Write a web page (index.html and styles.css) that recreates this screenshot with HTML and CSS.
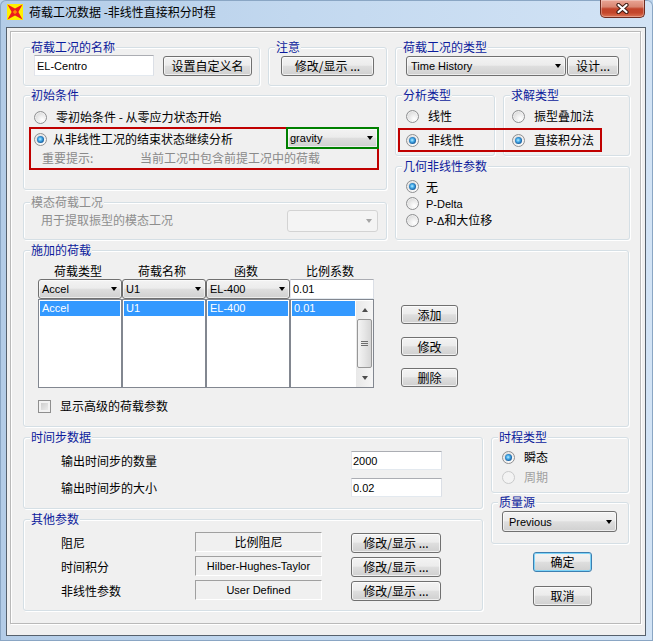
FILE: index.html
```html
<!DOCTYPE html>
<html>
<head>
<meta charset="utf-8">
<title>荷载工况数据</title>
<link rel="stylesheet" href="styles.css">
</head>
<body>
<div class="window">
  <div class="titlebar">
    <svg class="app-icon" width="16" height="16" viewBox="0 0 16 16">
      <rect x="0" y="0" width="16" height="16" fill="#fff000"/>
      <path d="M0.5 0.5 L8 4.6 L15.5 0.5 L11.4 8 L15.5 15.5 L8 11.4 L0.5 15.5 L4.6 8 Z" fill="#ec1c1c"/>
      <path d="M8 5.8 L10.2 8 L8 10.2 L5.8 8 Z" fill="#ff8a00"/>
    </svg>
    <span class="title">荷载工况数据 -非线性直接积分时程</span>
    <div class="close-btn">
      <svg width="13" height="11" viewBox="0 0 13 11">
        <path d="M2.5 2 L10.5 9 M10.5 2 L2.5 9" stroke="#3d1a12" stroke-width="4.2" stroke-linecap="round"/>
        <path d="M2.5 2 L10.5 9 M10.5 2 L2.5 9" stroke="#ffffff" stroke-width="2.2" stroke-linecap="round"/>
      </svg>
    </div>
  </div>

  <div class="client">
    <div class="panel">

      <div class="row row-a">
        <div class="group g-name">
          <span class="legend">荷载工况的名称</span>
          <div class="textbox tb-name lat">EL-Centro</div>
          <div class="btn btn-custom">设置自定义名</div>
        </div>
        <div class="group g-note">
          <span class="legend">注意</span>
          <div class="btn btn-note">修改/显示 ...</div>
        </div>
        <div class="group g-type">
          <span class="legend">荷载工况的类型</span>
          <div class="combo combo-type lat"><span>Time History</span><i class="arrow"></i></div>
          <div class="btn btn-design">设计...</div>
        </div>
      </div>

      <div class="row row-b">
        <div class="col col-left">
          <div class="group g-init">
            <span class="legend">初始条件</span>
            <div class="opt opt-zero"><span class="radio"></span><span>零初始条件 - 从零应力状态开始</span></div>
            <div class="mark-red init-mark">
              <div class="opt opt-cont"><span class="radio on"></span><span>从非线性工况的结束状态继续分析</span></div>
              <div class="hint"><span class="hint-key">重要提示:</span><span>当前工况中包含前提工况中的荷载</span></div>
              <div class="combo combo-gravity lat"><span>gravity</span><i class="arrow"></i></div>
            </div>
          </div>
          <div class="group g-modal disabled">
            <span class="legend">模态荷载工况</span>
            <span class="modal-text">用于提取振型的模态工况</span>
            <div class="combo combo-disabled"><i class="arrow"></i></div>
          </div>
        </div>

        <div class="col col-right">
          <div class="subrow">
            <div class="group g-analysis">
              <span class="legend">分析类型</span>
              <div class="opt"><span class="radio"></span><span>线性</span></div>
              <div class="opt"><span class="radio on"></span><span>非线性</span></div>
            </div>
            <div class="group g-solve">
              <span class="legend">求解类型</span>
              <div class="opt"><span class="radio"></span><span>振型叠加法</span></div>
              <div class="opt"><span class="radio on"></span><span>直接积分法</span></div>
            </div>
          </div>
          <div class="group g-geom">
            <span class="legend">几何非线性参数</span>
            <div class="opt"><span class="radio on"></span><span>无</span></div>
            <div class="opt"><span class="radio"></span><span class="lat">P-Delta</span></div>
            <div class="opt"><span class="radio"></span><span><span class="lat">P-Δ</span>和大位移</span></div>
          </div>
          <div class="mark-red solve-mark"></div>
        </div>
      </div>

      <div class="row row-c">
        <div class="group g-loads">
          <span class="legend">施加的荷载</span>
          <div class="table">
            <div class="thead">
              <span>荷载类型</span><span>荷载名称</span><span>函数</span><span>比例系数</span>
            </div>
            <div class="selrow">
              <div class="combo lat"><span>Accel</span><i class="arrow"></i></div>
              <div class="combo lat"><span>U1</span><i class="arrow"></i></div>
              <div class="combo lat"><span>EL-400</span><i class="arrow"></i></div>
              <div class="textbox lat">0.01</div>
            </div>
            <div class="lists">
              <div class="list lat"><div class="sel">Accel</div></div>
              <div class="list lat"><div class="sel">U1</div></div>
              <div class="list lat"><div class="sel">EL-400</div></div>
              <div class="list list-scroll lat">
                <div class="list-body"><div class="sel">0.01</div></div>
                <div class="vscroll">
                  <div class="sb-btn"><i class="sb-up"></i></div>
                  <div class="sb-thumb"><i></i><i></i><i></i></div>
                  <div class="sb-btn sb-btn-down"><i class="sb-down"></i></div>
                </div>
              </div>
            </div>
            <div class="opt chk-row"><span class="check"></span><span>显示高级的荷载参数</span></div>
          </div>
          <div class="load-btns">
            <div class="btn">添加</div>
            <div class="btn">修改</div>
            <div class="btn">删除</div>
          </div>
        </div>
      </div>

      <div class="row row-d">
        <div class="col col-left2">
          <div class="group g-time">
            <span class="legend">时间步数据</span>
            <div class="field"><span class="field-label">输出时间步的数量</span><div class="textbox tb-num lat">2000</div></div>
            <div class="field"><span class="field-label">输出时间步的大小</span><div class="textbox tb-num lat">0.02</div></div>
          </div>
          <div class="group g-other">
            <span class="legend">其他参数</span>
            <div class="prow"><span class="plabel">阻尼</span><div class="static">比例阻尼</div><div class="btn pbtn">修改/显示 ...</div></div>
            <div class="prow"><span class="plabel">时间积分</span><div class="static lat">Hilber-Hughes-Taylor</div><div class="btn pbtn">修改/显示 ...</div></div>
            <div class="prow"><span class="plabel">非线性参数</span><div class="static lat">User Defined</div><div class="btn pbtn">修改/显示 ...</div></div>
          </div>
        </div>
        <div class="col col-right2">
          <div class="group g-hist">
            <span class="legend">时程类型</span>
            <div class="opt"><span class="radio on"></span><span>瞬态</span></div>
            <div class="opt opt-disabled"><span class="radio radio-disabled"></span><span>周期</span></div>
          </div>
          <div class="group g-mass">
            <span class="legend">质量源</span>
            <div class="combo combo-mass lat"><span>Previous</span><i class="arrow"></i></div>
          </div>
          <div class="okcancel">
            <div class="btn btn-default">确定</div>
            <div class="btn">取消</div>
          </div>
        </div>
      </div>

    </div>
  </div>
</div>
</body>
</html>
```

FILE: styles.css
```css
* { box-sizing: border-box; }
html, body { margin: 0; padding: 0; }
body {
  width: 653px;
  height: 641px;
  overflow: hidden;
  font-family: "Noto Sans CJK SC", "Liberation Sans", sans-serif;
  font-size: 12px;
  line-height: 16px;
  color: #000;
  background: #bcd4ec;
}
.lat { font-family: "Liberation Sans", "Noto Sans CJK SC", sans-serif; font-size: 11px; }

/* ---------- window frame ---------- */
.window {
  width: 653px;
  height: 641px;
  background: linear-gradient(to right, #b3cce7 0%, #c2d8ef 45%, #d2e3f5 100%);
  box-shadow: inset 0 0 0 1px #8aa6c4;
  border-radius: 6px 6px 0 0;
}
.titlebar {
  height: 27px;
  display: flex;
  align-items: flex-start;
  padding-left: 7px;
}
.app-icon { flex: none; margin-top: 4px; }
.title {
  margin-left: 6px;
  margin-top: 4px;
  line-height: 16px;
  white-space: nowrap;
}
.close-btn {
  margin-left: auto;
  margin-right: 8px;
  width: 45px;
  height: 18px;
  border: 1px solid #6e2b20;
  border-top: none;
  border-radius: 0 0 5px 5px;
  background: linear-gradient(#eaa595 0%, #d98672 40%, #c2442b 52%, #c4472c 75%, #dc7354 100%);
  box-shadow: inset 0 0 0 1px rgba(255, 255, 255, 0.3);
  display: flex;
  align-items: center;
  justify-content: center;
}

.client {
  margin-left: 6px;
  width: 640px;
  height: 609px;
  background: #f0f0f0;
  border: 1px solid #56616d;
  padding: 3px 0 0 3px;
}
.panel {
  width: 631px;
  height: 593px;
  border: 1px solid #b9b9b9;
  box-shadow: inset 1px 1px 0 #fff, 1px 1px 0 #fff;
  padding: 15px 0 0 12px;
}

/* ---------- group boxes ---------- */
.row { display: flex; gap: 8px; align-items: flex-start; }
.row-b { margin-top: 9px; }
.row-c { margin-top: 10px; }
.row-d { margin-top: 10px; }
.col { display: flex; flex-direction: column; flex: none; }

.group {
  position: relative;
  flex: none;
  border: 1px solid #d5dfe5;
  border-radius: 3px;
  box-shadow: inset 1px 1px 0 #fff, 1px 1px 0 #fff;
}
.legend {
  position: absolute;
  top: -9px;
  left: 6px;
  padding: 0 1px;
  background: #f0f0f0;
  color: #0c1b9c;
  line-height: 16px;
  white-space: nowrap;
}
.disabled .legend, .disabled { color: #8e8e8e; }

/* ---------- controls ---------- */
.btn {
  display: flex;
  align-items: center;
  justify-content: center;
  flex: none;
  border: 1px solid #707070;
  border-radius: 3px;
  background: linear-gradient(#f3f3f3 0%, #ececec 45%, #dedede 52%, #d0d0d0 100%);
  box-shadow: inset 0 0 0 1px rgba(255, 255, 255, 0.65);
  white-space: nowrap;
  line-height: 16px;
}
.btn-default {
  border-color: #3c7fb1;
  box-shadow: inset 0 0 0 1px #7fd4f7;
}
.combo {
  display: flex;
  align-items: center;
  flex: none;
  padding-left: 3px;
  border: 1px solid #707070;
  border-radius: 3px;
  background: linear-gradient(#f3f3f3 0%, #ececec 45%, #dedede 52%, #d0d0d0 100%);
  box-shadow: inset 0 0 0 1px rgba(255, 255, 255, 0.6);
  white-space: nowrap;
}
.arrow {
  margin-left: auto;
  margin-right: 4px;
  width: 0;
  height: 0;
  border-left: 3.5px solid transparent;
  border-right: 3.5px solid transparent;
  border-top: 4px solid #000;
}
.textbox {
  display: flex;
  align-items: center;
  flex: none;
  background: #fff;
  border: 1px solid;
  border-color: #abadb3 #dbdfe6 #e3e9ef #e2e3ea;
  padding: 0 2px;
  white-space: nowrap;
}

.opt { display: flex; align-items: center; height: 16px; white-space: nowrap; }
.radio {
  flex: none;
  width: 13px;
  height: 13px;
  border-radius: 50%;
  border: 1px solid #8f9092;
  background: radial-gradient(circle at 65% 70%, #ffffff 0, #ececec 40%, #cdcdcd 100%);
  box-shadow: inset 0 0 0 1px rgba(255, 255, 255, 0.5);
  display: flex;
  align-items: center;
  justify-content: center;
}
.radio.on::after {
  content: "";
  width: 7px;
  height: 7px;
  border-radius: 50%;
  background: radial-gradient(circle at 45% 45%, #bdeeff 0, #4fb3ee 30%, #1a66a8 65%, #0c3c6e 100%);
}
.radio-disabled {
  border-color: #c9cacb;
  background: #f3f3f3;
  box-shadow: none;
}
.opt-disabled { color: #a0a0a0; }
.check {
  flex: none;
  width: 13px;
  height: 13px;
  border: 1px solid #8f8f8f;
  background: linear-gradient(135deg, #c6c6c6, #f4f4f4);
  box-shadow: inset 0 0 0 2px #f3f3f3;
}

.mark-red { border: 2px solid #c00000; }

/* ---------- row A ---------- */
.g-name {
  width: 237px;
  height: 39px;
  display: flex;
  align-items: flex-start;
  padding: 7px 0 0 10px;
}
.tb-name { width: 120px; height: 21px; }
.btn-custom { margin-left: 9px; margin-top: 1px; width: 89px; height: 20px; }
.g-note {
  width: 119px;
  height: 39px;
  display: flex;
  align-items: flex-start;
  padding: 7px 0 0 12px;
}
.btn-note { margin-top: 1px; width: 93px; height: 20px; }
.g-type {
  width: 235px;
  height: 39px;
  display: flex;
  align-items: flex-start;
  padding: 7px 0 0 10px;
}
.combo-type { margin-top: 1px; width: 160px; height: 20px; padding-left: 4px; }
.btn-design { margin-top: 1px; margin-left: 1px; width: 52px; height: 20px; }

/* ---------- row B ---------- */
.col-left { width: 364px; }
.g-init {
  height: 95px;
  padding: 13px 0 0 5px;
}
.opt-zero { margin-left: 5px; gap: 9px; }
.init-mark {
  position: relative;
  margin-top: 2px;
  width: 350px;
  height: 43px;
  padding: 2px 0 0 3px;
}
.opt-cont { gap: 6px; }
.hint {
  display: flex;
  margin-top: 3px;
  padding-left: 8px;
  color: #8a8a8a;
  white-space: nowrap;
}
.hint-key { width: 98px; flex: none; }
.combo-gravity {
  position: absolute;
  top: -2px;
  right: -2px;
  width: 93px;
  height: 22px;
  border: 2px solid #008000;
  border-radius: 0;
  padding-left: 2px;
  box-shadow: inset 0 0 0 1px rgba(255, 255, 255, 0.6);
}
.combo-gravity .arrow { margin-right: 4px; }
.g-modal {
  margin-top: 12px;
  height: 38px;
  display: flex;
  align-items: center;
  padding: 6px 0 0 17px;
}
.g-modal .legend { color: #8e8e8e; }
.modal-text { align-self: flex-start; margin-top: 3px; }
.combo-disabled {
  align-self: flex-start;
  margin-left: auto;
  margin-right: 8px;
  margin-top: 1px;
  width: 91px;
  height: 22px;
  border-color: #d3d3d3;
  background: #f4f4f4;
  box-shadow: none;
}
.combo-disabled .arrow { border-top-color: #a5a5a5; margin-right: 5px; }

.col-right { width: 235px; position: relative; }
.subrow { display: flex; gap: 8px; }
.g-analysis {
  width: 100px;
  height: 61px;
  display: flex;
  flex-direction: column;
  gap: 8px;
  padding: 12px 0 0 10px;
}
.g-solve {
  width: 127px;
  height: 61px;
  display: flex;
  flex-direction: column;
  gap: 8px;
  padding: 12px 0 0 8px;
}
.g-analysis .opt, .g-solve .opt { gap: 9px; }
.g-geom {
  margin-top: 10px;
  height: 74px;
  padding: 11px 0 0 10px;
}
.g-geom .opt { height: 17px; gap: 7px; }
.solve-mark {
  position: absolute;
  left: 3px;
  top: 33px;
  width: 204px;
  height: 24px;
}

/* ---------- row C ---------- */
.g-loads {
  width: 606px;
  height: 177px;
  display: flex;
  align-items: flex-start;
  padding: 12px 0 0 14px;
}
.table { width: 336px; flex: none; }
.thead {
  display: grid;
  grid-template-columns: repeat(4, 84px);
  height: 16px;
  text-align: center;
}
.thead span { padding-right: 4px; }
.selrow {
  display: grid;
  grid-template-columns: repeat(4, 84px);
  height: 20px;
}
.selrow .combo, .selrow .textbox { height: 20px; }
.selrow .combo { padding-left: 3px; }
.selrow .combo .arrow { margin-right: 4px; }
.lists {
  display: grid;
  grid-template-columns: repeat(4, 84px);
  height: 88px;
}
.list {
  background: #fff;
  border: 1px solid #828790;
  padding: 1px;
}
.sel {
  height: 15px;
  line-height: 15px;
  padding-left: 2px;
  background: #3399ff;
  color: #fff;
  white-space: nowrap;
}
.list-scroll { display: flex; padding: 1px 0 0 1px; }
.list-body { flex: 1; margin-right: 1px; }
.vscroll {
  width: 17px;
  height: 86px;
  flex: none;
  display: flex;
  flex-direction: column;
  background: linear-gradient(to right, #e8e8e8, #f6f6f6);
}
.sb-btn {
  height: 17px;
  display: flex;
  align-items: center;
  justify-content: center;
}
.sb-up, .sb-down {
  width: 0;
  height: 0;
  border-left: 3.5px solid transparent;
  border-right: 3.5px solid transparent;
}
.sb-up { border-bottom: 4px solid #4d4d4d; }
.sb-down { border-top: 4px solid #4d4d4d; }
.sb-thumb {
  margin: 1px 1px 0 1px;
  height: 49px;
  border: 1px solid #979797;
  border-radius: 2px;
  background: linear-gradient(to right, #f4f4f4, #e6e6e6 50%, #d6d6d6);
  display: flex;
  flex-direction: column;
  align-items: center;
  justify-content: center;
  gap: 1px;
}
.sb-thumb i { display: block; width: 7px; height: 1px; background: #6e6e6e; }
.sb-btn-down { margin-top: 1px; }
.chk-row { margin-top: 11px; gap: 9px; }
.load-btns {
  display: flex;
  flex-direction: column;
  margin-left: 27px;
  padding-top: 42px;
  flex: none;
}
.load-btns .btn { width: 57px; height: 19px; }
.load-btns .btn + .btn { margin-top: 13px; }
.load-btns .btn:last-child { margin-top: 12px; }

/* ---------- row D ---------- */
.col-left2 { width: 460px; }
.g-time {
  height: 72px;
  display: flex;
  flex-direction: column;
  gap: 8px;
  padding: 13px 0 0 37px;
}
.field { display: flex; align-items: center; height: 19px; }
.field-label { width: 290px; flex: none; }
.tb-num { width: 91px; height: 19px; padding-left: 1px; }
.g-other {
  margin-top: 10px;
  height: 92px;
  display: flex;
  flex-direction: column;
  gap: 3px;
  padding: 12px 0 0 37px;
}
.prow { display: flex; align-items: center; height: 21px; }
.plabel { width: 134px; flex: none; }
.static {
  align-self: flex-start;
  width: 127px;
  height: 20px;
  flex: none;
  border: 1px solid;
  border-color: #a0a0a0 #ffffff #ffffff #a0a0a0;
  text-align: center;
  line-height: 16px;
  padding-top: 1px;
  white-space: nowrap;
}
.pbtn {
  align-self: flex-start;
  margin-left: 29px;
  margin-top: 1px;
  width: 90px;
  height: 20px;
}

.col-right2 { width: 138px; }
.g-hist {
  height: 56px;
  display: flex;
  flex-direction: column;
  gap: 4px;
  padding: 11px 0 0 10px;
}
.g-hist .opt { gap: 9px; }
.g-mass {
  margin-top: 9px;
  height: 42px;
  padding: 8px 0 0 10px;
}
.combo-mass { width: 115px; height: 21px; padding-left: 6px; }
.okcancel {
  display: flex;
  flex-direction: column;
  gap: 14px;
  margin-left: 42px;
  margin-top: 8px;
}
.okcancel .btn { width: 59px; height: 20px; }
```
